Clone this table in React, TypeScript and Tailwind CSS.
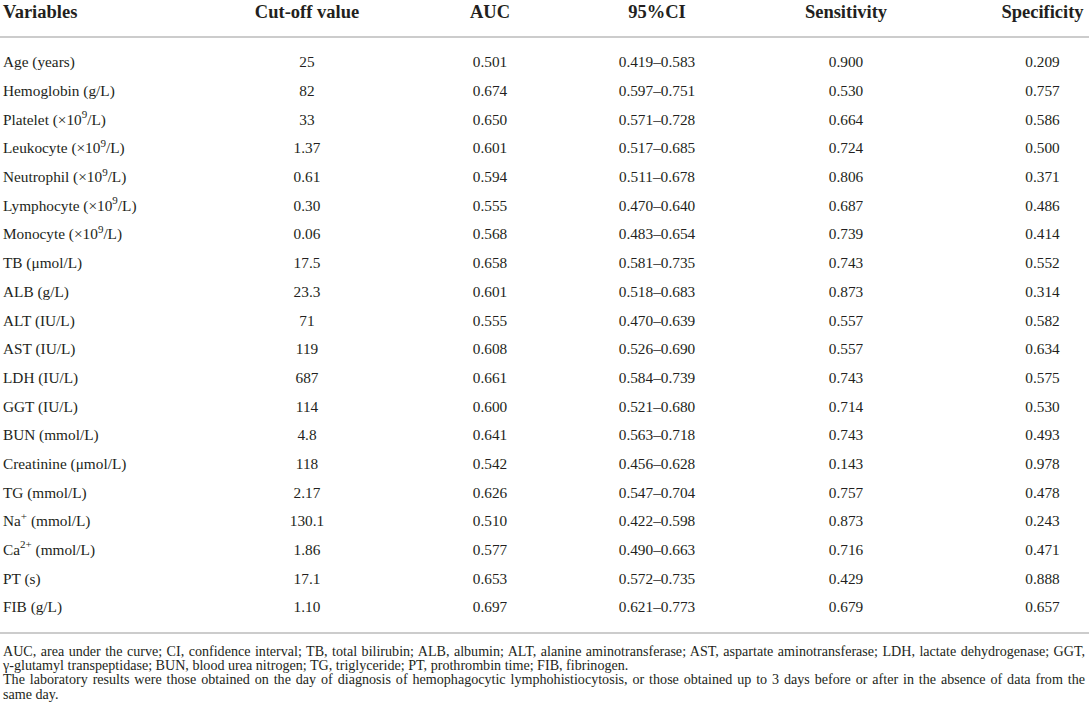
import React from "react";

const Sup = ({ children }: { children: React.ReactNode }) => (
  <sup className="text-[11px] relative top-[-0.6em] align-baseline">{children}</sup>
);

const rows: [React.ReactNode, string, string, string, string, string][] = [
  ["Age (years)", "25", "0.501", "0.419–0.583", "0.900", "0.209"],
  ["Hemoglobin (g/L)", "82", "0.674", "0.597–0.751", "0.530", "0.757"],
  [<>Platelet (×10<Sup>9</Sup>/L)</>, "33", "0.650", "0.571–0.728", "0.664", "0.586"],
  [<>Leukocyte (×10<Sup>9</Sup>/L)</>, "1.37", "0.601", "0.517–0.685", "0.724", "0.500"],
  [<>Neutrophil (×10<Sup>9</Sup>/L)</>, "0.61", "0.594", "0.511–0.678", "0.806", "0.371"],
  [<>Lymphocyte (×10<Sup>9</Sup>/L)</>, "0.30", "0.555", "0.470–0.640", "0.687", "0.486"],
  [<>Monocyte (×10<Sup>9</Sup>/L)</>, "0.06", "0.568", "0.483–0.654", "0.739", "0.414"],
  ["TB (μmol/L)", "17.5", "0.658", "0.581–0.735", "0.743", "0.552"],
  ["ALB (g/L)", "23.3", "0.601", "0.518–0.683", "0.873", "0.314"],
  ["ALT (IU/L)", "71", "0.555", "0.470–0.639", "0.557", "0.582"],
  ["AST (IU/L)", "119", "0.608", "0.526–0.690", "0.557", "0.634"],
  ["LDH (IU/L)", "687", "0.661", "0.584–0.739", "0.743", "0.575"],
  ["GGT (IU/L)", "114", "0.600", "0.521–0.680", "0.714", "0.530"],
  ["BUN (mmol/L)", "4.8", "0.641", "0.563–0.718", "0.743", "0.493"],
  ["Creatinine (μmol/L)", "118", "0.542", "0.456–0.628", "0.143", "0.978"],
  ["TG (mmol/L)", "2.17", "0.626", "0.547–0.704", "0.757", "0.478"],
  [<>Na<Sup>+</Sup> (mmol/L)</>, "130.1", "0.510", "0.422–0.598", "0.873", "0.243"],
  [<>Ca<Sup>2+</Sup> (mmol/L)</>, "1.86", "0.577", "0.490–0.663", "0.716", "0.471"],
  ["PT (s)", "17.1", "0.653", "0.572–0.735", "0.429", "0.888"],
  ["FIB (g/L)", "1.10", "0.697", "0.621–0.773", "0.679", "0.657"],
];

const grid = "grid grid-cols-[216px_182px_184px_150px_228px_1fr]";

export default function App() {
  return (
    <div
      className="w-[1089px] h-[720px] bg-white text-[#231f20] overflow-hidden"
      style={{ fontFamily: '"Liberation Serif", "DejaVu Serif", serif' }}
    >
      <div className={`${grid} font-bold text-[18.5px] leading-[24px] pb-[12px] border-b-2 border-[#cccccc]`}>
        <div className="pl-[3px]">Variables</div>
        <div className="text-center">Cut-off value</div>
        <div className="text-center">AUC</div>
        <div className="text-center">95%CI</div>
        <div className="text-center">Sensitivity</div>
        <div className="text-center pl-[36px]">Specificity</div>
      </div>
      <div className="pt-[10px] pb-[10px] border-b-2 border-[#cccccc]">
        {rows.map((r, i) => (
          <div key={i} className={`${grid} h-[28.7px] items-center text-[15.3px] leading-[18px] whitespace-nowrap`}>
            <div className="pl-[3px]">{r[0]}</div>
            <div className="text-center">{r[1]}</div>
            <div className="text-center">{r[2]}</div>
            <div className="text-center">{r[3]}</div>
            <div className="text-center">{r[4]}</div>
            <div className="text-center pl-[36px]">{r[5]}</div>
          </div>
        ))}
      </div>
      <div className="pt-[10px] pl-[3px] pr-[4px] text-[14.1px] leading-[14.3px]">
        <div className="text-justify [text-align-last:justify] whitespace-nowrap">
          AUC, area under the curve; CI, confidence interval; TB, total bilirubin; ALB, albumin; ALT, alanine aminotransferase; AST, aspartate aminotransferase; LDH, lactate dehydrogenase; GGT,
        </div>
        <div>γ-glutamyl transpeptidase; BUN, blood urea nitrogen; TG, triglyceride; PT, prothrombin time; FIB, fibrinogen.</div>
        <div className="text-justify [text-align-last:justify] whitespace-nowrap">
          The laboratory results were those obtained on the day of diagnosis of hemophagocytic lymphohistiocytosis, or those obtained up to 3 days before or after in the absence of data from the
        </div>
        <div>same day.</div>
      </div>
    </div>
  );
}
